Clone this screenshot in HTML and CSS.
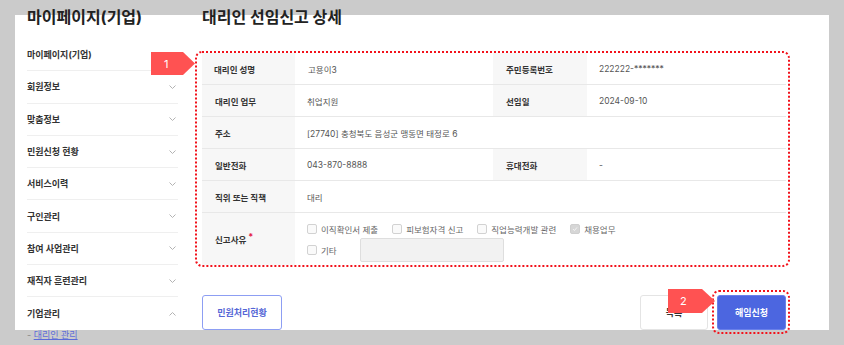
FILE: index.html
```html
<!DOCTYPE html>
<html lang="ko">
<head>
	<meta charset="UTF-8">
	<title>대리인 선임신고 상세</title>
	<link rel="stylesheet" href="styles.css">
</head>
<body>
	<div class="frame">
		<div class="page">
			<!-- 왼쪽 메뉴 -->
			<aside class="side">
				<h2 class="side-title">마이페이지(기업)</h2>
				<ul class="menu">
					<li><span>마이페이지(기업)</span></li>
					<li><span>회원정보</span><svg class="chev" viewBox="0 0 7 4"><polyline points="0.5,0.5 3.5,3.5 6.5,0.5"/></svg></li>
					<li><span>맞춤정보</span><svg class="chev" viewBox="0 0 7 4"><polyline points="0.5,0.5 3.5,3.5 6.5,0.5"/></svg></li>
					<li><span>민원신청 현황</span><svg class="chev" viewBox="0 0 7 4"><polyline points="0.5,0.5 3.5,3.5 6.5,0.5"/></svg></li>
					<li><span>서비스이력</span><svg class="chev" viewBox="0 0 7 4"><polyline points="0.5,0.5 3.5,3.5 6.5,0.5"/></svg></li>
					<li><span>구인관리</span><svg class="chev" viewBox="0 0 7 4"><polyline points="0.5,0.5 3.5,3.5 6.5,0.5"/></svg></li>
					<li><span>참여 사업관리</span><svg class="chev" viewBox="0 0 7 4"><polyline points="0.5,0.5 3.5,3.5 6.5,0.5"/></svg></li>
					<li><span>재직자 훈련관리</span><svg class="chev" viewBox="0 0 7 4"><polyline points="0.5,0.5 3.5,3.5 6.5,0.5"/></svg></li>
					<li class="open"><span>기업관리</span><svg class="chev" viewBox="0 0 7 4"><polyline points="0.5,3.5 3.5,0.5 6.5,3.5"/></svg></li>
				</ul>
				<div class="sub"><span class="dash">-</span> <a href="#">대리인 관리</a></div>
			</aside>

			<!-- 상세 내용 -->
			<main class="main">
				<h2 class="title">대리인 선임신고 상세</h2>

				<div class="note note-table">
					<span class="marker m1">1</span>
					<div class="info">
						<div class="th">대리인 성명</div>
						<div class="td">고용이3</div>
						<div class="th">주민등록번호</div>
						<div class="td">222222-*******</div>

						<div class="th">대리인 업무</div>
						<div class="td">취업지원</div>
						<div class="th">선임일</div>
						<div class="td">2024-09-10</div>

						<div class="th">주소</div>
						<div class="td wide">[27740] 충청북도 음성군 맹동면 태정로 6</div>

						<div class="th">일반전화</div>
						<div class="td">043-870-8888</div>
						<div class="th">휴대전화</div>
						<div class="td">-</div>

						<div class="th">직위 또는 직책</div>
						<div class="td wide">대리</div>

						<div class="th last">신고사유<i class="req">*</i></div>
						<div class="td wide last reasons">
							<div class="line">
								<label class="chk"><span class="box"></span>이직확인서 제출</label>
								<label class="chk"><span class="box"></span>피보험자격 신고</label>
								<label class="chk"><span class="box"></span>직업능력개발 관련</label>
								<label class="chk"><span class="box checked"><svg viewBox="0 0 10 10"><polyline points="2.5,5 4.3,7 7.5,3"/></svg></span>채용업무</label>
							</div>
							<div class="line line2">
								<label class="chk"><span class="box"></span>기타</label>
								<span class="etc"></span>
							</div>
						</div>
					</div>
				</div>

				<div class="btns">
					<button class="btn btn-line">민원처리현황</button>
					<div class="btns-right">
						<button class="btn btn-gray">목록</button>
						<span class="note note-btn">
							<span class="marker m2">2</span>
							<button class="btn btn-blue">해임신청</button>
						</span>
					</div>
				</div>
			</main>
		</div>
	</div>
</body>
</html>
```

FILE: styles.css
```css
*{
	margin: 0;
	padding: 0;
	box-sizing: border-box;
}
body{
	background: #cbcbcb;
	font-family: "Inter", "Noto Sans CJK KR", sans-serif;
	color: #333;
}
ul{
	list-style: none;
}
.frame{
	display: flow-root;
	margin: 15px;
	width: 814px;
	height: 315px;
	background: #fff;
}
.page{
	display: flex;
	gap: 24px;
	margin-top: -8px;
	padding: 0 43px 0 12px;
}

/* 왼쪽 메뉴 */
.side{
	width: 151px;
	flex: none;
}
.side-title, .title{
	font-size: 16px;
	line-height: 20px;
	font-weight: 700;
	color: #222;
}
.side-title{
	margin-bottom: 12px;
}
.menu li{
	display: flex;
	align-items: center;
	justify-content: space-between;
	height: 32.3px;
	padding-right: 2px;
	border-bottom: 1px solid #efefef;
	font-size: 9px;
	font-weight: 700;
	color: #333;
}
.menu li.open{
	border-bottom: none;
}
.chev{
	width: 7px;
	height: 4px;
	fill: none;
	stroke: #b3b3b3;
	stroke-width: 1;
}
.sub{
	font-size: 9px;
	line-height: 10px;
}
.sub .dash{
	color: #888;
}
.sub a{
	color: #5b6bd8;
}

/* 상세 */
.main{
	width: 584px;
	flex: none;
}
.title{
	margin-bottom: 26px;
}
.note{
	position: relative;
}
.note::after{
	content: "";
	position: absolute;
	border: 2px dotted #f2121b;
	border-radius: 7px;
	pointer-events: none;
}
.note-table::after{
	top: -2px;
	left: -7px;
	right: -4px;
	bottom: -2px;
}
.marker{
	position: absolute;
	z-index: 2;
	display: flex;
	align-items: center;
	background: #ff5252;
	color: #fff;
	font-size: 11px;
	font-family: "Inter", sans-serif;
}
.m1{
	left: -51px;
	top: -1px;
	width: 44px;
	height: 23px;
	padding-left: 13px;
	clip-path: polygon(0 0, 32px 0, 44px 50%, 32px 100%, 0 100%);
}
.m2{
	left: -49px;
	top: -6px;
	width: 47px;
	height: 24px;
	padding-left: 12px;
	clip-path: polygon(0 0, 34px 0, 47px 50%, 34px 100%, 0 100%);
}

.info{
	display: grid;
	grid-template-columns: 93px 198px 94px 199px;
	font-size: 8.5px;
}
.th, .td{
	display: flex;
	align-items: center;
	height: 32px;
	padding: 0 12px;
	border-bottom: 1px solid #e8e8e8;
}
.th{
	background: #f7f7f7;
	font-weight: 700;
	color: #333;
}
.td{
	color: #555;
	padding-left: 13px;
}
.th + .td + .th{
	padding-left: 13px;
}
.th + .td + .th + .td{
	padding-left: 12px;
}
.wide{
	grid-column: span 3;
}
.last{
	height: 52px;
	border-bottom: none;
}
.req{
	font-style: normal;
	color: #e3204b;
	font-size: 9px;
	margin-left: 2px;
	position: relative;
	top: -3px;
}
.reasons{
	flex-direction: column;
	align-items: flex-start;
	justify-content: flex-start;
	padding-top: 9px;
}
.line{
	display: flex;
	align-items: center;
	gap: 14px;
	height: 14px;
}
.line2{
	height: 24px;
	margin-top: 2px;
	gap: 23px;
}
.chk{
	display: flex;
	align-items: center;
	gap: 4px;
	color: #666;
}
.box{
	width: 10px;
	height: 10px;
	border: 1px solid #d2d2d2;
	border-radius: 2px;
	background: #fafafa;
}
.box.checked{
	background: #d6d6d6;
	border-color: #cfcfcf;
}
.box svg{
	display: block;
	width: 8px;
	height: 8px;
	fill: none;
	stroke: #f4f4f4;
	stroke-width: 1.2;
}
.etc{
	width: 144px;
	height: 24px;
	background: #f2f2f2;
	border: 1px solid #dedede;
	border-radius: 2px;
}

/* 버튼 */
.btns{
	display: flex;
	justify-content: space-between;
	margin-top: 30px;
}
.btns-right{
	display: flex;
	gap: 9px;
}
.btn{
	height: 35px;
	border-radius: 3px;
	font-family: "Inter", "Noto Sans CJK KR", sans-serif;
	font-size: 9px;
	font-weight: 700;
	background: #fff;
	cursor: pointer;
}
.btn-line{
	width: 80px;
	border: 1px solid #8d9ef3;
	color: #5566d6;
}
.btn-gray{
	width: 68px;
	border: 1px solid #e4e4e4;
	color: #333;
}
.btn-blue{
	width: 69px;
	border: 1px solid #6a80ea;
	background: #4c66e0;
	color: #fff;
}
.note-btn{
	display: block;
}
.note-btn .btn{
	display: block;
}
.note-btn::after{
	top: -5px;
	left: -5px;
	right: -4px;
	bottom: -4px;
}
```
